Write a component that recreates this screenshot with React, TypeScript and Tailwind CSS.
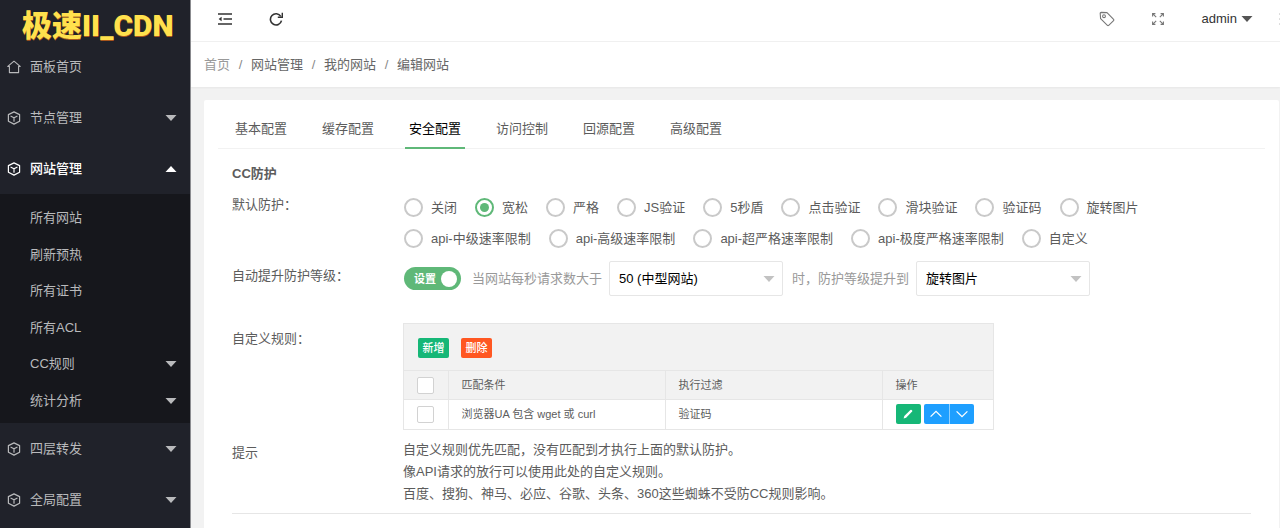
import React, { useState } from "react";
import clsx from "clsx";

const menuTop = [
  { label: "面板首页", icon: "home" },
  { label: "节点管理", icon: "cube", arrow: "down" },
  { label: "网站管理", icon: "cube", arrow: "up", active: true },
];

const subMenu = [
  { label: "所有网站" },
  { label: "刷新预热" },
  { label: "所有证书" },
  { label: "所有ACL" },
  { label: "CC规则", arrow: "down" },
  { label: "统计分析", arrow: "down" },
];

const menuBottom = [
  { label: "四层转发", icon: "cube", arrow: "down" },
  { label: "全局配置", icon: "cube", arrow: "down" },
];

const crumbs = ["首页", "网站管理", "我的网站", "编辑网站"];

const tabs = ["基本配置", "缓存配置", "安全配置", "访问控制", "回源配置", "高级配置"];

const protections = [
  ["关闭", "宽松", "严格", "JS验证", "5秒盾", "点击验证", "滑块验证", "验证码", "旋转图片"],
  ["api-中级速率限制", "api-高级速率限制", "api-超严格速率限制", "api-极度严格速率限制", "自定义"],
];

function Triangle({ up, className }: { up?: boolean; className?: string }) {
  return (
    <svg viewBox="0 0 12 6" className={clsx("w-3 h-1.5", className)} fill="currentColor">
      <path d={up ? "M0.5 6L6 0L11.5 6Z" : "M0.5 0L6 6L11.5 0Z"} />
    </svg>
  );
}

function HomeIcon() {
  return (
    <svg viewBox="0 0 14 14" className="w-3.5 h-3.5" fill="none" stroke="currentColor" strokeWidth="1.1" strokeLinejoin="round" strokeLinecap="round">
      <path d="M2.4 6.4H0.8L7 1.2L13.2 6.4H11.6V12.6H2.4Z" />
    </svg>
  );
}

function CubeIcon() {
  return (
    <svg viewBox="0 0 14 14" className="w-3.5 h-3.5" fill="none" stroke="currentColor" strokeWidth="1.2" strokeLinejoin="round" strokeLinecap="round">
      <path d="M7 0.9L12.6 3.6V10.2L7 13.1L1.4 10.2V3.6Z" />
      <path d="M4 5.2L7 6.8L10 5.2M7 6.8V10.2" />
    </svg>
  );
}

function MenuItem({ item }: { item: any }) {
  return (
    <a
      href="#"
      className={clsx(
        "flex items-center h-[51px] pl-[7px] pr-[13px]",
        item.active ? "text-white font-medium" : "text-[#b9babc]"
      )}
    >
      {item.icon === "home" ? <HomeIcon /> : <CubeIcon />}
      <span className="ml-[9px] flex-1">{item.label}</span>
      {item.arrow && <Triangle up={item.arrow === "up"} />}
    </a>
  );
}

function Sidebar() {
  return (
    <aside className="w-[191px] shrink-0 bg-[#20222a] border-r border-[#8b8c90]">
      <div className="h-[41px] pt-1.5 pl-[22px] leading-10 text-[30px] font-black text-[#ffe14d] whitespace-nowrap font-[Roboto,'Noto_Sans_CJK_SC',sans-serif] [text-shadow:0_1px_0_#a8561c]">
        极速II_CDN
      </div>
      <nav>
        {menuTop.map((item) => (
          <MenuItem key={item.label} item={item} />
        ))}
        <div className="grid grid-rows-6 h-[229px] pt-1.5 pb-1 bg-[#16171c]">
          {subMenu.map((item) => (
            <a key={item.label} href="#" className="flex items-center justify-between pl-[30px] pr-[13px] text-[#b9babc]">
              {item.label}
              {item.arrow && <Triangle />}
            </a>
          ))}
        </div>
        {menuBottom.map((item) => (
          <MenuItem key={item.label} item={item} />
        ))}
      </nav>
    </aside>
  );
}

function Header() {
  return (
    <header className="flex items-center h-[42px] pb-1 pl-[27px] bg-white border-b border-[#f0f0f0] text-[#333] overflow-hidden">
      <button aria-label="侧边伸缩">
        <svg viewBox="0 0 14 12" className="w-3.5 h-3" fill="none" stroke="currentColor" strokeWidth="1.5">
          <path d="M0 1H14M5.5 6H14M0 11H14" />
          <path d="M3.6 3.8V8.2L0.6 6Z" fill="currentColor" stroke="none" />
        </svg>
      </button>
      <button aria-label="刷新" className="ml-[37px]">
        <svg viewBox="0 0 14 14" className="w-3.5 h-3.5" fill="none" stroke="currentColor" strokeWidth="1.6">
          <path d="M11.8 4.4A5.6 5.6 0 1 0 12.5 8.6" />
          <path d="M13.4 0.8V5.2H8.8" />
        </svg>
      </button>
      <div className="ml-auto flex items-center">
        <button aria-label="便签" className="text-[#777]">
          <svg viewBox="0 0 16 16" className="w-4 h-4" fill="none" stroke="currentColor" strokeWidth="1.1" strokeLinejoin="round">
            <path d="M1.2 2.4Q1.2 1.4 2.2 1.4L8 1.6L14.6 8.4Q15.2 9.1 14.6 9.7L9.7 14.4Q9 15 8.4 14.4L1.6 7.6Z" />
            <circle cx="5" cy="5.2" r="1.4" />
          </svg>
        </button>
        <button aria-label="全屏" className="ml-[37px] text-[#777]">
          <svg viewBox="0 0 12 12" className="w-3 h-3" fill="none" stroke="currentColor" strokeWidth="1.1">
            <path d="M0.6 3.4V0.6H3.4M0.6 0.6L4.2 4.2M8.6 0.6H11.4V3.4M11.4 0.6L7.8 4.2M0.6 8.6V11.4H3.4M0.6 11.4L4.2 7.8M8.6 11.4H11.4V8.6M11.4 11.4L7.8 7.8" />
          </svg>
        </button>
        <button className="ml-[38px] flex items-center">
          admin
          <Triangle className="ml-1 text-[#555]" />
        </button>
        <button aria-label="更多" className="ml-[26px] -mr-[3px]">
          <svg viewBox="0 0 4 14" className="w-1 h-3.5" fill="#888">
            <circle cx="2" cy="2" r="1.4" />
            <circle cx="2" cy="7" r="1.4" />
            <circle cx="2" cy="12" r="1.4" />
          </svg>
        </button>
      </div>
    </header>
  );
}

function Breadcrumb() {
  return (
    <nav className="flex items-center h-[45px] px-[13px] bg-white shadow-[0_1px_2px_rgba(0,0,0,0.05)]">
      {crumbs.map((c, i) => (
        <React.Fragment key={c}>
          {i > 0 && <span className="w-[21px] text-center text-[#888]">/</span>}
          <a href="#" className={i === 0 ? "text-[#999]" : "text-[#666]"}>
            {c}
          </a>
        </React.Fragment>
      ))}
    </nav>
  );
}

function Select({ label, options }: { label: string; options: string[] }) {
  return (
    <div className="relative w-[174px]">
      <select
        aria-label={label}
        className="appearance-none w-full h-[35px] pl-[9px] pr-6 border border-[#e6e6e6] rounded-xs bg-white text-black"
      >
        {options.map((o) => (
          <option key={o}>{o}</option>
        ))}
      </select>
      <Triangle className="absolute right-2 top-[15px] text-[#c2c2c2] pointer-events-none" />
    </div>
  );
}

function CheckBox({ label }: { label: string }) {
  return (
    <input
      type="checkbox"
      aria-label={label}
      className="block mx-auto appearance-none w-[17px] h-[17px] border border-[#d2d2d2] rounded-xs bg-white checked:bg-[#5fb878]"
    />
  );
}

function RulesTable() {
  return (
    <div className="w-[591px] max-w-full border border-[#e6e6e6] text-[11px]">
      <div className="flex gap-3 h-[46px] pt-3.5 pl-3.5 bg-[#f2f2f2]">
        <button className="h-5 w-[31px] rounded-xs bg-[#16b777] text-white font-medium">新增</button>
        <button className="h-5 w-[31px] rounded-xs bg-[#ff5722] text-white font-medium">删除</button>
      </div>
      <table className="w-full table-fixed border-collapse text-left leading-4">
        <thead>
          <tr className="h-[29px] bg-[#f2f2f2] border-y border-[#e6e6e6]">
            <th className="w-11 border-r border-[#e6e6e6]">
              <CheckBox label="全选" />
            </th>
            <th className="w-[217px] pl-[13px] font-normal border-r border-[#e6e6e6]">匹配条件</th>
            <th className="w-[217px] pl-[13px] font-normal border-r border-[#e6e6e6]">执行过滤</th>
            <th className="pl-[13px] font-normal">操作</th>
          </tr>
        </thead>
        <tbody>
          <tr className="h-[29px]">
            <td className="border-r border-[#e6e6e6]">
              <CheckBox label="选择规则" />
            </td>
            <td className="pl-[13px] border-r border-[#e6e6e6]">浏览器UA 包含 wget 或 curl</td>
            <td className="pl-[13px] border-r border-[#e6e6e6]">验证码</td>
            <td className="pl-[13px]">
              <div className="flex text-white">
                <button aria-label="编辑" className="flex items-center justify-center w-[25px] h-5 rounded-xs bg-[#16b777]">
                  <svg viewBox="0 0 10 10" className="w-2.5 h-2.5" fill="currentColor">
                    <path d="M0.6 9.4L1.3 6.9L7.4 0.9Q8 0.4 8.6 0.9L9.1 1.4Q9.6 2 9.1 2.6L3.1 8.7Z" />
                  </svg>
                </button>
                <button aria-label="上移" className="flex items-center justify-center ml-[3px] w-[25px] h-5 rounded-l-xs bg-[#1e9fff]">
                  <svg viewBox="0 0 12 8" className="w-3 h-2" fill="none" stroke="currentColor" strokeWidth="1.3">
                    <path d="M0.6 6.6L6 1.4L11.4 6.6" />
                  </svg>
                </button>
                <button aria-label="下移" className="flex items-center justify-center w-[25px] h-5 rounded-r-xs border-l border-[#8fd0ff] bg-[#1e9fff]">
                  <svg viewBox="0 0 12 8" className="w-3 h-2" fill="none" stroke="currentColor" strokeWidth="1.3">
                    <path d="M0.6 1.4L6 6.6L11.4 1.4" />
                  </svg>
                </button>
              </div>
            </td>
          </tr>
        </tbody>
      </table>
    </div>
  );
}

export default function App() {
  const [tab, setTab] = useState("安全配置");
  const [level, setLevel] = useState("宽松");
  const [auto, setAuto] = useState(true);

  return (
    <div className="flex min-h-screen bg-[#f2f2f2] text-[13px] leading-5 text-[#5c5c5c] font-['Liberation_Sans','Noto_Sans_CJK_SC',sans-serif]">
      <Sidebar />
      <div className="flex flex-col flex-1 min-w-0">
        <Header />
        <Breadcrumb />
        <main className="flex-1 mt-[13px] ml-[13px] mr-px pt-2.5 px-3.5 bg-white rounded-t-xs">
          {/* Tabs */}
          <div className="flex gap-[27px] h-[39px] pl-[13px] border-b border-[#f2f2f2]">
            {tabs.map((t) => (
              <button
                key={t}
                onClick={() => setTab(t)}
                className={clsx(
                  "h-[39px] w-[60px] border-b-2",
                  t === tab ? "border-[#5fb878] text-black" : "border-transparent"
                )}
              >
                {t}
              </button>
            ))}
          </div>

          <div className="px-3.5 pt-[15px]">
            <h2 className="font-bold">CC防护</h2>

            {/* Default protection */}
            <fieldset className="flex mt-2">
              <legend className="float-left w-[172px] h-[26px] leading-[26px]">默认防护：</legend>
              <div className="flex-1">
                {protections.map((row, i) => (
                  <div key={i} className="flex flex-wrap gap-x-[18px]">
                    {row.map((p) => (
                      <label key={p} className="flex items-center gap-2 h-[31px]">
                        <input
                          type="radio"
                          name="level"
                          checked={p === level}
                          onChange={() => setLevel(p)}
                          className="appearance-none grid place-items-center w-[19px] h-[19px] rounded-full border-2 border-[#c9c9c9] checked:border-[#5fb878] checked:before:block checked:before:w-[9px] checked:before:h-[9px] checked:before:rounded-full checked:before:bg-[#5fb878]"
                        />
                        {p}
                      </label>
                    ))}
                  </div>
                ))}
              </div>
            </fieldset>

            {/* Auto upgrade */}
            <div className="flex mt-[7px]">
              <div className="w-[172px] shrink-0 leading-[30px]">自动提升防护等级：</div>
              <div className="flex items-center text-[#999]">
                <label
                  className={clsx(
                    "flex items-center w-[57px] h-[23px] pl-2.5 pr-1 rounded-full text-white text-[11px] font-bold",
                    auto ? "bg-[#5fb878]" : "bg-[#d2d2d2] flex-row-reverse"
                  )}
                >
                  <input type="checkbox" role="switch" checked={auto} onChange={() => setAuto(!auto)} className="sr-only" />
                  设置
                  <span className="ml-auto w-4 h-4 rounded-full bg-white" />
                </label>
                <span className="ml-[11px] mr-[7px]">当网站每秒请求数大于</span>
                <Select label="每秒请求数" options={["50 (中型网站)", "100 (大型网站)"]} />
                <span className="ml-[9px] mr-[7px]">时，防护等级提升到</span>
                <Select label="防护等级" options={["旋转图片", "验证码", "滑块验证"]} />
              </div>
            </div>

            {/* Custom rules */}
            <div className="flex mt-[27px]">
              <div className="w-[171px] shrink-0 leading-8">自定义规则：</div>
              <RulesTable />
            </div>

            {/* Tips */}
            <div className="flex mt-[9px]">
              <div className="w-[171px] shrink-0 leading-7">提示</div>
              <div className="leading-[22px]">
                <p>自定义规则优先匹配，没有匹配到才执行上面的默认防护。</p>
                <p>像API请求的放行可以使用此处的自定义规则。</p>
                <p>百度、搜狗、神马、必应、谷歌、头条、360这些蜘蛛不受防CC规则影响。</p>
              </div>
            </div>
            <hr className="mt-2 border-[#e6e6e6]" />
          </div>
        </main>
      </div>
    </div>
  );
}
